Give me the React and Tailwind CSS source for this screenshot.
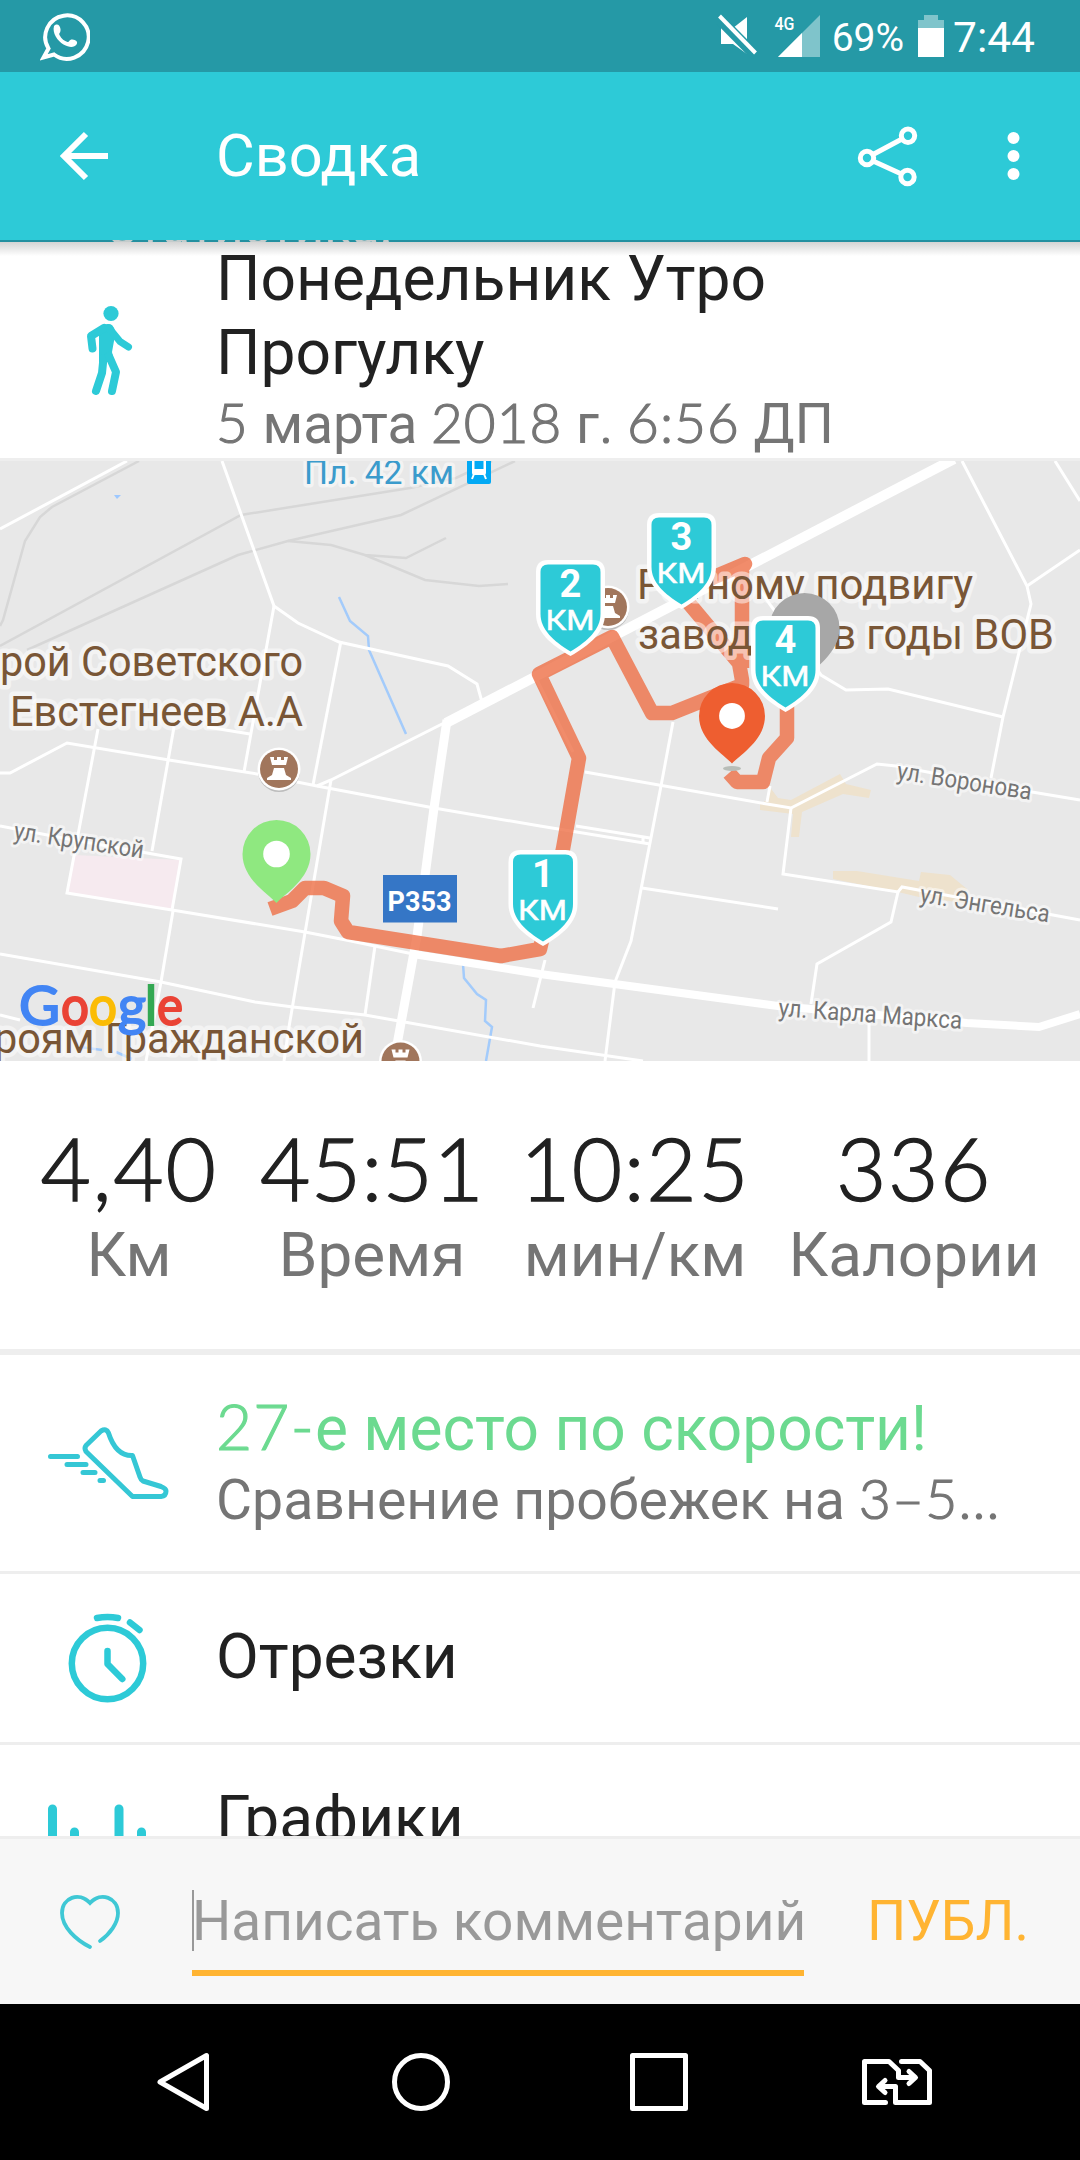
import React from 'react';

const stats = [
    { value: '4,40', label: 'Км', tracking: 'tracking-[1.7px]' },
    { value: '45:51', label: 'Время', tracking: 'tracking-[0.3px]' },
    { value: '10:25', label: 'мин/км', tracking: 'tracking-[1.5px]' },
    { value: '336', label: 'Калории', tracking: 'tracking-[1.5px]' },
];

const minorRoads = [
    'M0 529 L127 461',
    'M222 461 L274 606 L298 623 L339 642 L448 666 L477 684 L482 702',
    'M274 606 L266 650 L244 772',
    'M341 641 L313 785',
    'M0 773 L10 773 L67 743 L169 760 L257 774 L317 786 L434 808 L540 826 L650 844',
    'M576 826 L650 838 M643 838 L643 843',
    'M98 729 L67 893 L172 910 L181 859 L79 841 L0 826',
    'M174 727 L152 851',
    'M207 727 L250 734',
    'M173 911 L161 982 L146 1061',
    'M172 910 L305 932 L351 941 L413 954',
    'M331 780 L289 1027 L284 1061',
    'M317 786 L331 780 L448 721',
    'M0 954 L161 982 L255 1002 L293 1007 L365 1015 L540 1046 L643 1061',
    'M0 1015 L20 1020',
    'M375 946 L365 1015',
    'M545 960 L533 1008',
    'M962 461 L1027 586 L1031 604 L1003 717 L991 778',
    'M1027 586 L1080 550',
    'M1055 461 L1080 501',
    'M760 590 L771 606 L821 675 L846 690 L888 689 L1003 717',
    'M585 772 L767 804 L791 808 L877 764 L896 766 L1032 792 L1080 800',
    'M767 802 L770 786',
    'M791 808 L783 874 L898 892 L902 887 L1080 920',
    'M898 892 L891 922 L817 964 L811 1004',
    'M673 722 L661 786 L631 941 L615 982 L605 1061',
    'M642 888 L778 909',
    'M869 1023 L869 1061',
    'M537 680 L573 752',
];

const railways = [
    'M139 461 L52 507 L40 517 L25 541 L3 620 L0 626',
    'M0 646 L241 515 L410 488 L456 478 L492 461',
    'M27 650 L238 555 L288 541 L401 515 L515 461',
    'M288 541 L331 545 L365 555 L406 558 L446 538',
    'M365 555 L425 580 L479 586 L508 584',
];

const places = [
    { text: 'рой Советского', x: 0, y: 676, w: 303 },
    { text: 'Евстегнеев А.А', x: 10, y: 726, w: 293 },
    { text: 'роям Гражданской', x: -6, y: 1053, w: 370 },
    { text: 'Ратному подвигу', x: 637, y: 599, w: 336 },
    { text: 'заводчан в годы ВОВ', x: 638, y: 649, w: 416 },
];

const streets = [
    { text: 'ул. Крупской', x: 13, y: 839, w: 131, angle: 8.5 },
    { text: 'ул. Воронова', x: 896, y: 779, w: 136, angle: 8.8 },
    { text: 'ул. Энгельса', x: 919, y: 902, w: 131, angle: 9 },
    { text: 'ул. Карла Маркса', x: 778, y: 1016, w: 184, angle: 4 },
];

const googleLetters = [
    { ch: 'G', x: 19, w: 41, color: '#4285f4' },
    { ch: 'o', x: 61, w: 28, color: '#ea4335' },
    { ch: 'o', x: 89, w: 28, color: '#fbbc05' },
    { ch: 'g', x: 118, w: 28, color: '#4285f4' },
    { ch: 'l', x: 145, w: 12, color: '#34a853' },
    { ch: 'e', x: 157, w: 26, color: '#ea4335' },
];

const Digits = ({ children }) => (
    <span className="font-['Lato',sans-serif] font-light tracking-[0.02em] [-webkit-text-stroke:1.2px_currentColor]">{children}</span>
);

const Castle = ({ x, y }) => (
    <g transform={`translate(${x} ${y})`}>
        <circle r="21" cy="2" fill="#bdbdbd" />
        <circle r="21.5" fill="#fff" />
        <circle r="19" fill="#a1765c" />
        <path d="M-9 -12h4v3h3v-3h4v3h3v-3h4l-2 8h-14z M-5 -1h10l2 7l5 3v2h-24v-2l5 -3z" fill="#fff" />
    </g>
);

const Pin = ({ x, y, color, scale = 1, hole = true }) => (
    <g transform={`translate(${x} ${y}) scale(${scale})`}>
        <path d="M0 83 C-8 74 -34 59 -34 34 A34 34 0 0 1 34 34 C34 59 8 74 0 83z" fill={color} />
        {hole && <circle cy="34" r="13.3" fill="#fff" />}
    </g>
);

const KmMarker = ({ x, y, n }) => (
    <g transform={`translate(${x} ${y})`}>
        <path d="M12 0H57Q69 0 69 12V54C69 72 54 85 34.5 96C15 85 0 72 0 54V12Q0 0 12 0z" fill="#fff" />
        <path d="M12 4.5H57Q64.5 4.5 64.5 12V54C64.5 69 52 81 34.5 91.5C17 81 4.5 69 4.5 54V12Q4.5 4.5 12 4.5z" fill="#2dcad7" />
        <text x="34.5" y="36.5" textAnchor="middle" fontSize="38" className="font-['Roboto',sans-serif] font-bold" fill="#fff">{n}</text>
        <text x="9.5" y="70" fontSize="28.5" textLength="49" lengthAdjust="spacingAndGlyphs" className="font-['Roboto',sans-serif]" fill="#fff" stroke="#fff" strokeWidth="0.5">КМ</text>
    </g>
);

const StatusBar = () => (
    <div className="flex h-[72px] items-center bg-[#2599a6] pl-[40px] pr-[45px] text-white">
        <svg width="50" height="50" viewBox="40 11 50 50" fill="none">
            <path d="M48.5 48.5A21.7 21.7 0 1 1 54 54.5L43.5 57.5z" stroke="#fff" strokeWidth="4" />
            <path d="M54 26c3-3 6-1 6.500 3s-2 4-1 6c2 4 5 6 8 7c2 0 2-3 5-2.500s6 2 4 5s-7 3.500-13 0S52 33 54 26z" fill="#fff" />
        </svg>
        <div className="ml-auto flex items-center">
            <svg width="105" height="48" viewBox="714 12 105 48">
                <path d="M719 28L731 28L745 17V54L731 44H719z" fill="#fff" />
                <path d="M715.5 17L754 56" stroke="#2599a6" strokeWidth="11" />
                <path d="M717.5 16L753.5 53" stroke="#fff" strokeWidth="4" />
                <text x="772.5" y="30" fontSize="18" textLength="20" lengthAdjust="spacingAndGlyphs" className="font-['Roboto',sans-serif] font-medium" fill="#fff">4G</text>
                <path d="M776 57L818 15V57z" fill="#7fc4cb" />
                <path d="M776 57L800 33V57z" fill="#fff" />
            </svg>
            <span className="ml-[11px] pt-[4px] font-['Roboto',sans-serif] text-[39px] leading-[72px]">69%</span>
            <svg className="ml-[14px]" width="26" height="42" viewBox="0 0 26 42">
                <path d="M6 0h14v5h6v8H0V5h6z" fill="#7fc4cb" />
                <path d="M0 13h26v29H0z" fill="#fff" />
            </svg>
            <span className="ml-[9px] pt-[4px] font-['Roboto',sans-serif] text-[42.5px] leading-[72px]">7:44</span>
        </div>
    </div>
);

const AppBar = () => (
    <div className="flex h-[168px] items-center bg-[#2dcad7] text-white">
        <svg className="ml-[58px]" width="52" height="52" viewBox="58 130 52 52" fill="none" stroke="#fff" strokeWidth="6">
            <path d="M108 156H64M86 134L64 156L86 178" />
        </svg>
        <h1 className="ml-[106px] font-['Roboto',sans-serif] text-[59.5px] leading-[72px]">Сводка</h1>
        <svg className="ml-auto mr-[88px]" width="62" height="64" viewBox="857 124 62 64" fill="none" stroke="#fff" strokeWidth="5">
            <circle cx="867" cy="158" r="6.7" />
            <circle cx="908" cy="135.7" r="6.7" />
            <circle cx="907.5" cy="177" r="6.7" />
            <path d="M873 154.5L902 139M873 161L901.5 174" />
        </svg>
        <svg className="mr-[60px]" width="13" height="50" viewBox="0 0 13 50" fill="#fff">
            <circle cx="6.5" cy="7" r="6" />
            <circle cx="6.5" cy="25" r="6" />
            <circle cx="6.5" cy="43" r="6" />
        </svg>
    </div>
);

const ActivityHeader = () => (
    <div className="flex h-[216px] bg-gradient-to-b from-[#d4d4d4] via-white via-[14px] to-white">
        <svg width="216" height="216" viewBox="0 242 216 216" fill="none" stroke="#2dcad7" strokeLinecap="round" strokeLinejoin="round">
            <circle cx="111" cy="313.5" r="7.6" fill="#2dcad7" stroke="none" />
            <path d="M99 328Q106 322 112 325Q117 330 114 341L112 352L114 362L99 362V335z" fill="#2dcad7" stroke="none" />
            <path d="M104 328L91 336L92.5 348.5" strokeWidth="8" />
            <path d="M109 328L120 341.5L128.5 347" strokeWidth="7" />
            <path d="M103.5 358L102 373L96 391" strokeWidth="8" />
            <path d="M109 356L116 372L112 391" strokeWidth="8" />
        </svg>
        <div className="font-['Roboto',sans-serif]">
            <h2 className="text-[62.3px] leading-[74px] text-[#212121]">Понедельник Утро<br />Прогулку</h2>
            <p className="text-[54.8px] leading-[64px] text-[#757575]">
                <Digits>5</Digits> марта <Digits>2018</Digits> г. <Digits>6:56</Digits> ДП
            </p>
        </div>
    </div>
);

const RouteMap = () => (
    <svg className="block border-t-[3px] border-[#eee]" width="1080" height="603" viewBox="0 461 1080 600">
        <rect y="461" width="1080" height="600" fill="#e8e8e8" />
        <path d="M74 855L181 860L172 910L67 893z" fill="#f6eaef" />
        <g fill="#eee2cd">
            <path d="M769 786L778 798L791 800L840 774L846 784L871 790L869 798L843 794L802 812L799 837L791 837L793 814L760 810L760 804L767 800z" />
            <path d="M833 871L857 871L919 881L921 872L950 875L967 889L964 903L919 897L898 892L833 879z" />
        </g>
        <g fill="none" stroke="#d7d7d7" strokeWidth="2.5">
            {railways.map((d) => <path key={d} d={d} />)}
        </g>
        <g fill="none" stroke="#a3cbfb" strokeWidth="2.5">
            <path d="M339 597L350 621L368 636L369 650L406 734" />
            <path d="M463 964L464 978L477 994L486 1000L485 1021L492 1027L486 1061" />
            <path d="M80 1047L102 1050M116 1052L132 1059" />
        </g>
        <path d="M114 495L121 495L117 499z" fill="#9dc8ff" />
        <g fill="none" stroke="#fff" strokeWidth="3">
            {minorRoads.map((d) => <path key={d} d={d} />)}
        </g>
        <g fill="none" stroke="#fff">
            <path d="M446 723L954 459" strokeWidth="10" />
            <path d="M447 720L434 808L417 936L394 1061" strokeWidth="9" />
            <path d="M413 954L540 974L778 1006L967 1023L1039 1027L1080 1014" strokeWidth="8" />
        </g>

        <path
            d="M270 909L292 901L305 888L324 888L343 896L341 921L348 932L501 956L540 949L563 849L579 758L539 674L612 637L652 713L672 713L742 685L742 680L739 663L682 595L714 577L745 564L742 568L742 668M787 700L787 738L769 758L763 782L737 782L729 773"
            fill="none" stroke="#ee6f46" strokeWidth="14.5" strokeLinejoin="round" opacity="0.8"
        />
        <rect x="383" y="875" width="74" height="47.5" fill="#3576c6" />
        <text x="387.5" y="910.5" fontSize="28" textLength="64" lengthAdjust="spacingAndGlyphs" className="font-['Roboto',sans-serif] font-bold" fill="#fff">P353</text>

        <g className="font-['Roboto',sans-serif]" stroke="#fff" strokeOpacity="0.5" strokeLinejoin="round" style={{ paintOrder: 'stroke' }}>
            {places.map((p) => (
                <text key={p.text} x={p.x} y={p.y} fontSize="42.5" fill="#795636" strokeWidth="9" textLength={p.w} lengthAdjust="spacingAndGlyphs">{p.text}</text>
            ))}
            {streets.map((s) => (
                <text key={s.text} fontSize="25" fill="#757575" strokeWidth="6" transform={`translate(${s.x} ${s.y}) rotate(${s.angle})`} textLength={s.w} lengthAdjust="spacingAndGlyphs">{s.text}</text>
            ))}
            <text x="304" y="484" fontSize="33" fill="#3b9bcc" strokeWidth="7" textLength="150" lengthAdjust="spacingAndGlyphs">Пл. 42 км</text>
        </g>
        <rect x="467" y="458" width="24" height="26" rx="2" fill="#03a9f4" />
        <rect x="472" y="457" width="14" height="18" rx="2" fill="#fff" />
        <path d="M474.5 461H483.5V469H474.5z" fill="#03a9f4" />
        <path d="M474 474L472 479M484 474L486 479" stroke="#fff" strokeWidth="2" />

        <Castle x={279} y={769} />
        <Castle x={400.5} y={1061.5} />
        <Castle x={608} y={607} />

        <g className="font-['Lato',sans-serif]" fontSize="54" strokeWidth="2">
            {googleLetters.map((l) => (
                <text key={l.x} x={l.x} y="1025" fill={l.color} stroke={l.color} textLength={l.w} lengthAdjust="spacingAndGlyphs">{l.ch}</text>
            ))}
        </g>

        <Pin x={276.5} y={820} color="#8fe880" />
        <Pin x={804.5} y={593} color="#a7a7a7" scale={1.03} hole={false} />
        <ellipse cx="732" cy="768.5" rx="9" ry="2.5" fill="#b8bdb8" />
        <Pin x={732} y={683} color="#ee5e30" scale={0.97} />
        <KmMarker x={508.5} y={850} n={1} />
        <KmMarker x={536} y={560} n={2} />
        <KmMarker x={647} y={513} n={3} />
        <KmMarker x={751} y={616} n={4} />
    </svg>
);

const StatsRow = () => (
    <div className="grid h-[288px] grid-cols-[258px_228px_298px_260px] bg-white pt-[57px]">
        {stats.map((s) => (
            <div key={s.label} className="flex flex-col items-center">
                <span className={`font-['Lato',sans-serif] text-[87px] font-light leading-[100px] text-[#212121] [-webkit-text-stroke:1.4px_currentColor] ${s.tracking}`}>{s.value}</span>
                <span className="font-['Roboto',sans-serif] text-[62px] leading-[74px] text-[#757575]">{s.label}</span>
            </div>
        ))}
    </div>
);

const Shoe = () => (
    <svg width="216" height="216" viewBox="0 1355 216 216" fill="none" stroke="#35c7d5" strokeWidth="5" strokeLinecap="round" strokeLinejoin="round">
        <path d="M50.5 1456.500H77.5M67 1464.5H86M83 1472.5H95M100 1480.5H103.5" />
        <path d="M101 1431L86 1445.5Q84 1448 86 1451.5L132.5 1496.5H161Q166 1496 166 1491Q166 1488.5 161 1486.5L143 1481Q141 1480 140 1477L132.5 1455.5C119 1456 112 1444 108.5 1433Q106.5 1428 101 1431z" />
    </svg>
);

const Stopwatch = () => (
    <svg width="216" height="168" viewBox="0 1574 216 168" fill="none" stroke="#2dcad7" strokeWidth="6.5" strokeLinecap="round" strokeLinejoin="round">
        <circle cx="107.5" cy="1663.5" r="35.7" />
        <path d="M107.5 1651V1664L122.3 1679" />
        <path d="M97 1618Q107.5 1616 118 1618M130 1622.5L139.5 1630" />
    </svg>
);

const Bars = () => (
    <svg width="216" height="168" viewBox="0 1745 216 168" stroke="#2dcad7" strokeWidth="9" strokeLinecap="round">
        <path d="M52.5 1809V1860M74.5 1832V1860M119 1809V1860M141.5 1832V1860" />
    </svg>
);

const CommentBar = () => (
    <div className="flex h-[168px] border-t-[3px] border-[#eee] bg-[#f7f7f7] font-['Roboto',sans-serif] text-[55px]">
        <svg width="192" height="165" viewBox="0 1839 192 165" fill="none" stroke="#3fc8d5" strokeWidth="3.8" strokeLinecap="round">
            <path d="M90 1947C76 1940 62 1927 62 1913C62 1898 79 1891 90 1903C101 1891 118 1898 118 1913C118 1923 110 1934 100 1941" />
        </svg>
        <div className="mt-[49px] flex h-[88px] w-[612px] border-b-[6px] border-[#ffb432]">
            <span className="mt-[2px] h-[61px] w-[2px] shrink-0 bg-[#999]" />
            <span className="-ml-[2px] whitespace-nowrap leading-[66px] text-[#999]">Написать комментарий</span>
        </div>
        <span className="ml-[63px] mt-[49px] leading-[66px] text-[#ffb432]">ПУБЛ.</span>
    </div>
);

const NavBar = () => (
    <div className="h-[156px] bg-black">
        <svg width="1080" height="156" viewBox="0 2004 1080 156" fill="none" stroke="#fff" strokeWidth="5" strokeLinejoin="round" strokeLinecap="round">
            <path d="M206.5 2055.5V2108.5L160 2082z" />
            <circle cx="421" cy="2082" r="26.5" />
            <path d="M632.5 2055.5H685.5V2108.5H632.5z" />
            <path d="M885.5 2102.5H864.5V2061.5H889L898.5 2070.5V2077.5H915M909 2071.5L915.5 2077.5L909 2083.5" />
            <path d="M901.5 2061.5H920L929.5 2070.5V2102.5H895.5V2086.5H879M885 2080.5L878.5 2086.5L885 2092.5" />
        </svg>
    </div>
);

export default function App() {
    return (
        <div className="h-[2160px] w-[1080px] overflow-hidden bg-white">
            <StatusBar />
            <AppBar />
            {/* last pixels of the line scrolled under the app bar */}
            <div className="flex h-[2px] items-end overflow-hidden bg-[#2390a0] pl-[105px]">
                <span className="font-['Roboto',sans-serif] text-[51px] leading-[30px] text-[#c4cccc]">Статистика.</span>
            </div>
            <ActivityHeader />
            <RouteMap />
            <StatsRow />

            <div className="h-[487px] overflow-hidden font-['Roboto',sans-serif] text-[62.2px] text-[#212121]">
                <div className="flex h-[222px] border-t-[6px] border-[#eee]">
                    <Shoe />
                    <div className="pt-[35px]">
                        <p className="leading-[73px] text-[#6cda90]"><Digits>27-</Digits>е место по скорости!</p>
                        <p className="text-[55.4px] leading-[66px] text-[#757575]">Сравнение пробежек на <Digits>3–5...</Digits></p>
                    </div>
                </div>
                <div className="flex h-[171px] border-t-[3px] border-[#eee]">
                    <Stopwatch />
                    <p className="pt-[46px] leading-[74px]">Отрезки</p>
                </div>
                <div className="flex h-[171px] border-t-[3px] border-[#eee]">
                    <Bars />
                    <p className="pt-[37px] leading-[74px]">Графики</p>
                </div>
            </div>

            <CommentBar />
            <NavBar />
        </div>
    );
}
